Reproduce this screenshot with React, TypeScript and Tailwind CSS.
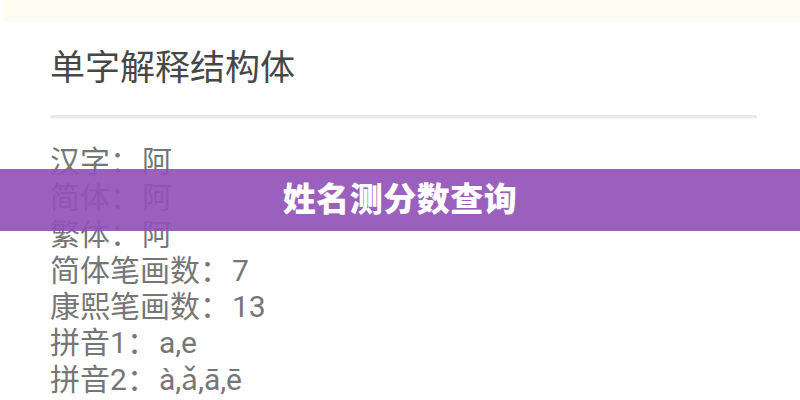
const rows: Array<[string, string]> = [
  ['汉字', '阿'],
  ['简体', '阿'],
  ['繁体', '阿'],
  ['简体笔画数', '7'],
  ['康熙笔画数', '13'],
  ['拼音1', 'a,e'],
  ['拼音2', 'à,ǎ,ā,ē'],
]

export default function App() {
  return (
    <div
      className="relative w-[800px] h-[400px] overflow-hidden bg-white"
      style={{ fontFamily: "Roboto, 'Noto Sans CJK SC', sans-serif" }}
    >
      <div className="ml-[4px] h-[22px] bg-[#fdfcf1]" />

      <div className="pl-[50px] pr-[43px]">
        <h1 className="mt-[27px] text-[35px] leading-[40px] text-[#474747]">
          单字解释结构体
        </h1>
        <div className="mt-[26px] h-[3px] bg-[#e9e9e9] rounded-sm shadow-[0_1px_1px_rgba(0,0,0,0.04)]" />

        <div className="mt-[26px] flex flex-col text-[30px] leading-[36.3px] text-[#767676]">
          {rows.map(([label, value]) => (
            <div key={label}>
              {label}：<span className="ml-[2px]">{value}</span>
            </div>
          ))}
        </div>
      </div>

      {/* banner laid over the page */}
      <div className="absolute left-0 right-0 top-[169px] h-[62px] bg-[#9251b8]/[0.92] flex items-center justify-center">
        <span className="text-white text-[33px] font-black tracking-[0.5px]">姓名测分数查询</span>
      </div>
    </div>
  )
}
